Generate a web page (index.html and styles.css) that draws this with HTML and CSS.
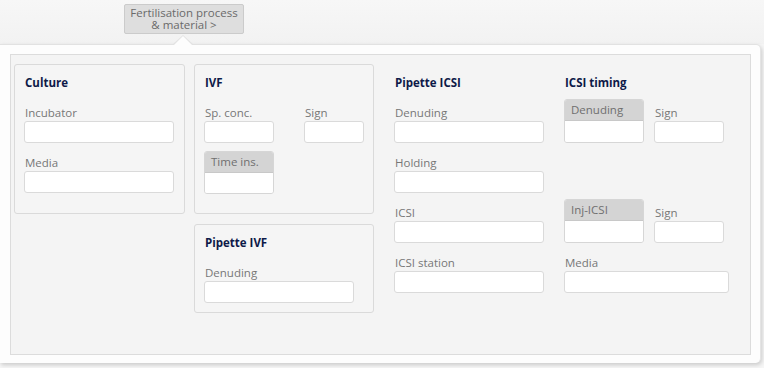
FILE: index.html
```html
<!DOCTYPE html>
<html>
<head>
<meta charset="utf-8">
<link rel="stylesheet" href="styles.css">
</head>
<body>
<div class="page">
  <div class="topbar">
    <button class="trigger"><span class="line">Fertilisation process</span><span class="line">&amp; material &gt;</span></button>
  </div>
  <div class="popover">
    <div class="panel">
      <div class="col col1">
        <div class="box first">
          <div class="title">Culture</div>
          <div class="field"><div class="label">Incubator</div><div class="input w150"></div></div>
          <div class="field"><div class="label">Media</div><div class="input w150"></div></div>
        </div>
      </div>
      <div class="col col2">
        <div class="box">
          <div class="title">IVF</div>
          <div class="row">
            <div class="field"><div class="label">Sp. conc.</div><div class="input w70"></div></div>
            <div class="field gap30"><div class="label">Sign</div><div class="input w60"></div></div>
          </div>
          <div class="stack w70 mt8"><div class="stack-head">Time ins.</div><div class="stack-body short"></div></div>
        </div>
        <div class="box second">
          <div class="title">Pipette IVF</div>
          <div class="field"><div class="label">Denuding</div><div class="input w150"></div></div>
        </div>
      </div>
      <div class="col col3">
        <div class="title">Pipette ICSI</div>
        <div class="field"><div class="label">Denuding</div><div class="input w150"></div></div>
        <div class="field"><div class="label">Holding</div><div class="input w150"></div></div>
        <div class="field"><div class="label">ICSI</div><div class="input w150"></div></div>
        <div class="field"><div class="label">ICSI station</div><div class="input w150"></div></div>
      </div>
      <div class="col col4">
        <div class="title">ICSI timing</div>
        <div class="row">
          <div class="stack w80"><div class="stack-head">Denuding</div><div class="stack-body"></div></div>
          <div class="field gap10"><div class="label">Sign</div><div class="input w70"></div></div>
        </div>
        <div class="spacer"></div>
        <div class="row">
          <div class="stack w80"><div class="stack-head">Inj-ICSI</div><div class="stack-body"></div></div>
          <div class="field gap10"><div class="label">Sign</div><div class="input w70"></div></div>
        </div>
        <div class="field"><div class="label">Media</div><div class="input w165"></div></div>
      </div>
    </div>
  </div>
</div>
</body>
</html>
```
FILE: styles.css
```css
html, body {
  margin: 0;
  padding: 0;
}
body {
  width: 764px;
  height: 368px;
  overflow: hidden;
  background: #f6f6f6;
  font-family: "Open Sans", "Noto Sans", sans-serif;
  font-size: 11.5px;
}
.page {
  display: flex;
  flex-direction: column;
}
.topbar {
  height: 44px;
  padding-left: 124px;
  box-sizing: border-box;
  padding-top: 4px;
  background: linear-gradient(#f7f7f7, #f2f2f2);
}
.trigger {
  width: 120px;
  height: 30px;
  box-sizing: border-box;
  background: #dedede;
  border: 1px solid #cbcbcb;
  border-radius: 2px;
  color: #6a6a6a;
  font-family: inherit;
  font-size: 11.5px;
  padding: 2px 0 0 0;
  display: flex;
  flex-direction: column;
  align-items: center;
  justify-content: flex-start;
}
.trigger .line {
  display: block;
  height: 12px;
  line-height: 12px;
  white-space: nowrap;
}
.popover {
  position: relative;
  width: 761px;
  height: 319px;
  box-sizing: border-box;
  background: #fdfdfd;
  border-top: 1px solid #e2e2e2;
  border-right: 1px solid #e4e4e4;
  border-radius: 0 5px 5px 0;
  box-shadow: 1px 2px 4px rgba(0,0,0,0.18);
  padding: 9px 10px 0 10px;
}
.popover::before {
  content: "";
  position: absolute;
  left: 172px;
  top: -10px;
  width: 0;
  height: 0;
  border-left: 11px solid transparent;
  border-right: 11px solid transparent;
  border-bottom: 10px solid #e2e2e2;
}
.popover::after {
  content: "";
  position: absolute;
  left: 173px;
  top: -9px;
  width: 0;
  height: 0;
  border-left: 10px solid transparent;
  border-right: 10px solid transparent;
  border-bottom: 10px solid #fdfdfd;
}
.panel {
  width: 741px;
  height: 301px;
  box-sizing: border-box;
  border: 1px solid #dcdcdc;
  background: #f4f4f4;
  padding: 9px 3px;
  display: flex;
  align-items: flex-start;
}
.col {
  display: flex;
  flex-direction: column;
}
.col1 { width: 171px; margin-right: 9px; }
.col2 { width: 180px; margin-right: 20px; }
.col3 { width: 170px; padding-top: 11px; box-sizing: border-box; }
.col4 { width: 180px; padding-top: 11px; box-sizing: border-box; }
.box {
  border: 1px solid #dadada;
  border-radius: 3px;
  background: #f5f5f5;
  padding: 10px 9px 19px 9px;
  display: flex;
  flex-direction: column;
}
.box.first { padding-bottom: 20px; }
.box.second { margin-top: 10px; padding-bottom: 9px; }
.title {
  font-weight: bold;
  color: #0e1a48;
  line-height: 16px;
  height: 16px;
  padding-left: 1px;
  font-size: 11.5px;
}
.field {
  display: flex;
  flex-direction: column;
  margin-top: 12px;
}
.row .field { margin-top: 0; }
.row {
  display: flex;
  align-items: flex-end;
}
.title + .field, .title + .row { margin-top: 14px; }
.label {
  color: #777;
  line-height: 16px;
  height: 16px;
  padding-left: 1px;
  white-space: nowrap;
}
.input {
  height: 22px;
  box-sizing: border-box;
  border: 1px solid #dadada;
  border-radius: 3px;
  background: #fff;
}
.w150 { width: 150px; }
.w165 { width: 165px; }
.w70 { width: 70px; }
.w60 { width: 60px; }
.w80 { width: 80px; }
.gap30 { margin-left: 30px; }
.gap10 { margin-left: 10px; }
.mt8 { margin-top: 8px; }
.stack {
  border: 1px solid #d6d6d6;
  border-radius: 3px;
  overflow: hidden;
  display: flex;
  flex-direction: column;
  box-sizing: border-box;
}
.row .stack { margin-top: -7px; }
.stack-head {
  height: 21px;
  background: #d4d4d4;
  color: #6f6f6f;
  line-height: 19px;
  padding-left: 6px;
  border-bottom: 1px solid #c8c8c8;
  box-sizing: border-box;
  white-space: nowrap;
}
.stack-body {
  height: 21px;
  background: #fff;
}
.stack-body.short { height: 20px; }
.spacer { height: 62px; }
```
